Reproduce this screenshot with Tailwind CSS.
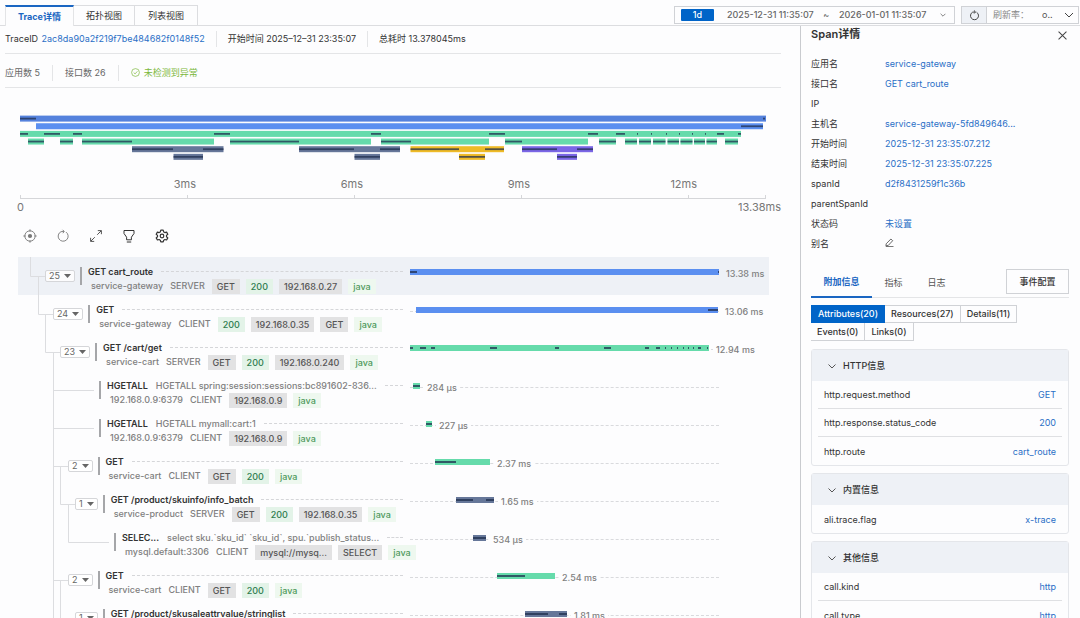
<!DOCTYPE html>
<html lang="zh-CN">
<head>
  <meta charset="UTF-8" />
  <meta name="viewport" content="width=device-width, initial-scale=1.0" />
  <title>Trace详情</title>
  <script src="https://cdn.jsdelivr.net/npm/@tailwindcss/browser@4"></script>
</head>
<body class="h-screen overflow-hidden bg-[#fdfdfe] font-['Inter','Noto_Sans_CJK_SC',sans-serif] text-[9px] leading-4 text-[#333]">
  <div class="flex h-full flex-col">
    <!-- Top bar -->
    <header class="flex h-[26px] shrink-0 items-end justify-between border-b border-[#dcdde0] pl-[5px] pr-px">
      <nav class="-mb-px flex h-[21px]">
        <button class="w-[69px] border-x border-t-2 border-x-[#e3e4e6] border-t-[#1a66c2] bg-[#fdfdfe] font-bold text-[#1a66c2]">Trace详情</button>
        <button class="w-[61px] border-y border-r border-[#dcdde0]">拓扑视图</button>
        <button class="w-[63px] border-y border-r border-[#dcdde0]">列表视图</button>
      </nav>
      <div class="mb-px flex gap-[6px] text-[#555]">
        <div class="flex h-[18px] w-[281px] items-center border border-[#d0d2d6] px-[6px]">
          <button class="h-3 w-[33px] rounded-[1px] bg-[#0064c8] font-medium leading-3 text-white">1d</button>
          <button class="ml-[13px] flex flex-1 items-center justify-between pr-[2px] font-medium text-[#666]">
            <span>2025-12-31 11:35:07</span><span>~</span><span>2026-01-01 11:35:07</span>
            <svg class="ml-1 h-[6px] w-[6px]" viewBox="0 0 6 6" fill="none" stroke="#666" stroke-width="0.8"><path d="M.6 1.8 3 4.2l2.4-2.4" /></svg>
          </button>
        </div>
        <div class="flex h-[18px] border border-[#d0d2d6]">
          <button aria-label="刷新" class="flex w-[25px] items-center justify-center border-r border-[#d0d2d6] bg-[#eef1f6]">
            <svg class="h-[11px] w-[11px]" viewBox="0 0 11 11" fill="none" stroke="#444"><path d="M7.6 2.3A4 4 0 1 1 3.6 2.2L6.2 1.900M4.900.400l1.600 1.500L5.200 3.500" /></svg>
          </button>
          <label class="flex w-[91px] items-center pl-[6px]">
            <span class="text-[#888]">刷新率：</span>
            <select class="ml-auto w-[18px] appearance-none bg-transparent"><option>o..</option></select>
            <svg class="mx-1 h-2 w-[10px] shrink-0" viewBox="0 0 10 8" fill="none" stroke="#444"><path d="M1 2l4 4 4-4" /></svg>
          </label>
        </div>
      </div>
    </header>

    <div class="flex min-h-0 flex-1">
      <!-- Trace -->
      <main class="min-w-0 flex-1 overflow-hidden">
        <section class="ml-[5px] mr-[19px]">
          <div class="flex h-7 items-center gap-[11px] border-b border-[#e4e5e7] pb-px">
            <div>TraceID <a href="#" class="ml-px text-[#2a6fc6]">2ac8da90a2f219f7be484682f0148f52</a></div>
            <span class="h-4 w-px bg-[#e4e5e7]"></span>
            <div>开始时间 2025–12–31 23:35:07</div>
            <span class="h-4 w-px bg-[#e4e5e7]"></span>
            <div>总耗时 13.378045ms</div>
          </div>
          <div class="flex h-[34px] items-center gap-3 border-b border-[#e4e5e7] pt-1 text-[#666]">
            <div>应用数 5</div>
            <span class="h-4 w-px bg-[#e4e5e7]"></span>
            <div>接口数 26</div>
            <span class="h-4 w-px bg-[#e4e5e7]"></span>
            <div class="flex items-center gap-1 text-[#7cb83c]">
              <svg class="h-[9px] w-[9px]" viewBox="0 0 9 9" fill="none" stroke="currentColor" stroke-width="0.7"><circle cx="4.5" cy="4.5" r="3.9" /><path d="M2.7 4.6l1.4 1.3 2.3-2.6" /></svg>
              未检测到异常
            </div>
          </div>
        </section>

        <!-- Overview -->
        <section class="ml-5 mr-[19px] pt-[27px] text-[11px] text-[#777]">
          <div class="pr-[15px]">
            <svg id="overview" class="block h-[46px] w-full" viewBox="0 0 746 46" preserveAspectRatio="none"></svg>
            <div class="flex pl-[9px] pt-[15px] text-right">
              <span class="w-[167px]">3ms</span><span class="w-[167px]">6ms</span><span class="w-[167px]">9ms</span><span class="w-[167px]">12ms</span>
            </div>
            <div class="mt-[3px] flex h-1 border-x border-b border-[#d5d6d9]">
              <span class="w-[167px] border-r border-[#d5d6d9]"></span><span class="w-[167px] border-r border-[#d5d6d9]"></span><span class="w-[167px] border-r border-[#d5d6d9]"></span><span class="w-[167px] border-r border-[#d5d6d9]"></span>
            </div>
          </div>
          <div class="-ml-[3px] flex justify-between"><span>0</span><span>13.38ms</span></div>
        </section>

        <!-- Tools -->
        <div class="flex h-[42px] items-center gap-[19px] pl-[23px] text-[#444]">
          <button aria-label="定位"><svg class="h-[14px] w-[14px]" viewBox="0 0 14 14" fill="none" stroke="#777" stroke-width="0.9"><circle cx="7" cy="7" r="5.2" /><circle cx="7" cy="7" r="2.1" fill="#777" stroke="none" /><path d="M7 .3v2.4M7 11.3v2.4M.3 7h2.4M11.3 7h2.4" /></svg></button>
          <button aria-label="重置"><svg class="h-[14px] w-[14px]" viewBox="0 0 14 14" fill="none" stroke="#777" stroke-width="0.9"><path d="M10 3.100A5 5 0 1 1 5 2.700l3-.3M6.600.800l1.600 1.600-1.300 1.800" /></svg></button>
          <button aria-label="全屏"><svg class="h-[14px] w-[14px]" viewBox="0 0 14 14" fill="none" stroke="#444" stroke-width="0.9"><path d="M8.2 5.8l4-4M8.8 1.6h3.6v3.6M5.8 8.2l-4 4M1.6 8.8v3.6h3.6" /></svg></button>
          <button aria-label="提示"><svg class="h-[14px] w-[14px]" viewBox="0 0 14 14" fill="none" stroke="#333"><path d="M2 1.5h10v3L9.4 8.2v2.6H4.6V8.2L2 4.5zM4.8 13h4.4" /></svg></button>
          <button aria-label="设置"><svg class="h-[14px] w-[14px]" viewBox="0 0 14 14" fill="none" stroke="#333" stroke-width="1.2" stroke-linejoin="round"><circle cx="7" cy="7" r="1.8" /><path d="M5.8 1.2h2.4l.5 1.7 1.2.7 1.7-.5 1.2 2.1-1.3 1.2v1.3l1.3 1.2-1.2 2.1-1.7-.5-1.2.7-.5 1.6H5.8l-.5-1.6-1.2-.7-1.7.5-1.2-2.1 1.3-1.2V6.4L1.2 5.2l1.2-2.1 1.7.5 1.2-.7z" /></svg></button>
        </div>

        <!-- Span list -->
        <div id="spans" class="ml-[18px] mr-[31px]"></div>
      </main>

      <!-- Span detail -->
      <aside class="w-[280px] shrink-0 overflow-hidden border-l border-[#c9cbcf] pl-[10px] pr-[11px]">
        <div class="flex items-center justify-between">
          <h2 class="text-[11px] font-semibold">Span详情</h2>
          <button aria-label="关闭"><svg class="mr-[2px] mt-[2px] h-[9px] w-[9px]" viewBox="0 0 8 8" stroke="#444" stroke-width="0.9"><path d="M.5.5l7 7M7.5.5l-7 7" /></svg></button>
        </div>
        <dl id="fields" class="mt-3 grid grid-cols-[74px_1fr] leading-5"></dl>

        <div class="mt-[15px] flex h-[29px] items-start border-b border-[#e4e5e7]">
          <button class="h-[29px] w-[61px] border-b-2 border-[#1a66c2] pb-px font-bold text-[#1a66c2]">附加信息</button>
          <button class="h-[27px] w-[43px] text-[#555]">指标</button>
          <button class="h-[27px] w-[43px] text-[#555]">日志</button>
          <button class="ml-auto h-[25px] w-[63px] border border-[#d0d2d6] font-medium">事件配置</button>
        </div>

        <div class="mt-[7px] font-medium">
          <div class="flex">
            <button class="h-[18px] border border-[#0064c8] bg-[#0064c8] px-[6px] text-white">Attributes(20)</button>
            <button class="h-[18px] border-y border-r border-[#d0d2d6] px-[6px]">Resources(27)</button>
            <button class="h-[18px] border-y border-r border-[#d0d2d6] px-[6px]">Details(11)</button>
          </div>
          <div class="flex">
            <button class="h-[18px] border-b border-r border-[#d0d2d6] px-[6px]">Events(0)</button>
            <button class="h-[18px] border-b border-r border-[#d0d2d6] px-[6px]">Links(0)</button>
          </div>
        </div>

        <div id="groups" class="mt-2 space-y-[7px]"></div>
      </aside>
    </div>
  </div>

  <script>
    const colors = { blue: '#5b8ff0', deep: '#5582dd', green: '#66dbab', slate: '#667799', yellow: '#efbb27', purple: '#7b66e6' };

    // Overview bars: [row, color, start, end, [dark segments]]
    const overview = [
      [0, 'deep', 0, 746, [[0, 16], [743, 745]]],
      [1, 'blue', 16, 743, [[721, 743]]],
      [2, 'green', 0, 721, [[0, 8], [24, 40], [53, 62], [194, 210], [351, 361], [469, 485], [568, 578], [596, 605], [617, 618], [631, 632], [646, 647], [659, 660], [672, 673], [685, 686], [697, 704], [718, 721]]],
      [3, 'green', 8, 24, [[8, 24]]], [3, 'green', 40, 53, [[40, 53]]],
      [3, 'green', 62, 194, [[62, 112]]], [3, 'green', 210, 351, [[210, 279]]],
      [3, 'green', 361, 469, [[361, 391]]], [3, 'green', 485, 568, [[485, 502]]],
      ...[[579, 596], [605, 617], [619, 631], [633, 645.5], [647.5, 659], [660.5, 672.5], [674, 685], [686.5, 697], [705, 718]].map(s => [3, 'green', ...s, [s]]),
      [4, 'slate', 112, 203.5, [[112, 153], [183, 203.5]]], [4, 'slate', 279, 380, [[279, 334], [360, 380]]],
      [4, 'yellow', 390.5, 484, [[390.5, 439], [465, 484]]], [4, 'purple', 502, 573, [[502, 537], [557, 573]]],
      [5, 'slate', 153.5, 183, [[153.5, 183]]], [5, 'slate', 334.5, 360, [[334.5, 360]]],
      [5, 'yellow', 439, 465, [[439, 465]]], [5, 'purple', 537, 557, [[537, 557]]]
    ];
    document.getElementById('overview').innerHTML = overview.map(([row, color, a, b, dark]) => {
      const y = 0.6 + row * 7.65;
      return `<rect x="${a}" y="${y}" width="${b - a}" height="6" fill="${colors[color]}" />` +
        dark.map(([s, e]) => `<rect x="${s}" y="${y + 2.1}" width="${e - s}" height="1.8" fill="#1f2d4d" fill-opacity="0.75" />`).join('');
    }).join('');

    // guides: ancestor levels still open; bar and dark are on a 309 wide scale
    const spans = [
      { depth: 0, count: 25, title: 'GET cart_route', service: 'service-gateway', kind: 'SERVER', tags: ['GET', '200', '192.168.0.27', 'java'], guides: [], color: 'blue', bar: [0, 309], dark: [[0, 7], [308, 309]], time: '13.38 ms' },
      { depth: 1, count: 24, title: 'GET', service: 'service-gateway', kind: 'CLIENT', tags: ['200', '192.168.0.35', 'GET', 'java'], guides: [], color: 'blue', bar: [6, 308], dark: [[298, 308]], time: '13.06 ms' },
      { depth: 2, count: 23, title: 'GET /cart/get', service: 'service-cart', kind: 'SERVER', tags: ['GET', '200', '192.168.0.240', 'java'], guides: [], color: 'green', bar: [0, 299], dark: [[0, 3], [10, 16], [21, 25], [80, 87], [145, 149], [194, 201], [235, 239], [246, 250], [255, 256], [261, 262], [267, 268], [273, 274], [278, 279], [283, 284], [288, 291], [297, 298]], time: '12.94 ms' },
      { depth: 3, title: 'HGETALL', detail: 'HGETALL spring:session:sessions:bc891602-836...', service: '192.168.0.9:6379', kind: 'CLIENT', tags: ['192.168.0.9', 'java'], guides: [3], color: 'green', bar: [3, 10], dark: [[3, 10]], time: '284 µs' },
      { depth: 3, title: 'HGETALL', detail: 'HGETALL mymall:cart:1', service: '192.168.0.9:6379', kind: 'CLIENT', tags: ['192.168.0.9', 'java'], guides: [3], color: 'green', bar: [16, 22], dark: [[16, 22]], time: '227 µs' },
      { depth: 3, count: 2, title: 'GET', service: 'service-cart', kind: 'CLIENT', tags: ['GET', '200', 'java'], guides: [3], color: 'green', bar: [25, 80], dark: [[25, 46]], time: '2.37 ms' },
      { depth: 4, count: 1, title: 'GET /product/skuinfo/info_batch', service: 'service-product', kind: 'SERVER', tags: ['GET', '200', '192.168.0.35', 'java'], guides: [3], color: 'slate', bar: [46, 84], dark: [[46, 63], [76, 84]], time: '1.65 ms' },
      { depth: 5, title: 'SELEC...', detail: 'select sku.`sku_id` `sku_id`, spu.`publish_status...', service: 'mysql.default:3306', kind: 'CLIENT', tags: ['mysql://mysq...', 'SELECT', 'java'], guides: [3], color: 'slate', bar: [63, 76], dark: [[63, 76]], time: '534 µs' },
      { depth: 3, count: 2, title: 'GET', service: 'service-cart', kind: 'CLIENT', tags: ['GET', '200', 'java'], guides: [3], color: 'green', bar: [87, 145], dark: [[87, 115]], time: '2.54 ms' },
      { depth: 4, count: 1, title: 'GET /product/skusaleattrvalue/stringlist', service: 'service-product', kind: 'SERVER', tags: ['GET', '200', '192.168.0.35', 'java'], guides: [3], color: 'slate', bar: [115, 157], dark: [[115, 138], [149, 157]], time: '1.81 ms' }
    ];
    const tagClass = { '200': 'bg-[#e3f3e8] text-[#2f7d4f]', java: 'bg-[#eef8ef] text-[#4e9a5c]' };
    const guideX = d => Math.floor(12.5 + 7.5 * d) + 0.5;

    document.getElementById('spans').innerHTML = spans.map((s, i) => {
      const gutter = Math.floor(27.5 + 7.5 * s.depth) + (s.count ? 0 : 31);
      const stem = guideX(s.depth);
      const lines = s.guides.map(g => `M${guideX(g)} 0V38`).join('') +
        `M${stem} 0V19.5H${s.count ? gutter : gutter - 5}` +
        (s.count ? `M${guideX(s.depth + 1)} 19.5V38` : '');
      const pct = n => (n / 309 * 100) + '%';
      return `
        <div class="flex h-[38px] ${i === 0 ? 'bg-[#eef1f6]' : ''}">
          <div class="flex w-[385px] shrink-0">
            <svg class="h-[38px] shrink-0 overflow-visible" style="width:${gutter}px" fill="none" stroke="#dcdde0"><path d="${lines}" /></svg>
            ${s.count ? `<button class="z-10 mr-[5px] mt-[13px] flex h-3 shrink-0 items-center gap-1 rounded-[2px] border border-[#d5d6d9] bg-white/80 px-[3px] leading-3 text-[#666]">${s.count}<svg class="h-1 w-[7px]" viewBox="0 0 7 4" fill="#666"><path d="M0 0h7L3.5 4z" /></svg></button>` : ''}
            <span class="mt-[10px] h-[18px] w-[2px] shrink-0 bg-[#a5a6a9]"></span>
            <div class="min-w-0 flex-1 whitespace-nowrap pl-[6px] pt-2 font-medium text-[#808080]">
              <div class="flex h-[13px] items-center">
                <span class="font-semibold text-[#333]">${s.title}</span>
                ${s.detail ? `<span class="ml-2">${s.detail}</span>` : ''}
                <span class="ml-2 min-w-0 flex-1 border-t border-dashed border-[#d5d6d9]"></span>
              </div>
              <div class="flex items-center gap-[6px] pl-[3px]">
                <span class="mr-px">${s.service}</span><span class="mr-px">${s.kind}</span>
                ${s.tags.map(t => `<span class="h-[15px] px-[5px] leading-[15px] ${tagClass[t] || 'bg-[#e2e2e3] text-[#555]'}">${t}</span>`).join('')}
              </div>
            </div>
          </div>
          <div class="ml-[7px] mr-[50px] flex-1 pt-[12px]">
            <div class="relative h-[6px]">
              <div class="absolute inset-x-0 top-1 border-t border-dashed border-[#d9dadd]"></div>
              <div class="absolute inset-y-0" style="left:${pct(s.bar[0])};width:${pct(s.bar[1] - s.bar[0])};background:${colors[s.color]}"></div>
              ${s.dark.map(([a, b]) => `<div class="absolute top-[2px] h-[2px] bg-[#1f2d4d]/75" style="left:${pct(a)};width:${pct(b - a)}"></div>`).join('')}
              <span class="absolute -top-[3px] ml-1 whitespace-nowrap px-[3px] font-medium text-[#808080] ${i === 0 ? '' : 'bg-[#fdfdfe]'}" style="left:${pct(s.bar[1])}">${s.time}</span>
            </div>
          </div>
        </div>`;
    }).join('');

    const edit = '<button aria-label="编辑"><svg class="h-[9px] w-[9px]" viewBox="0 0 9 9" fill="none" stroke="#444" stroke-width="0.8"><path d="M1.2 5.8 5.9 1l1.8 1.7L3.2 7.5l-2.3.3zM.8 8.6h7.7" /></svg></button>';
    const fields = [
      ['应用名', 'service-gateway'], ['接口名', 'GET cart_route'], ['IP', ''], ['主机名', 'service-gateway-5fd849646...'],
      ['开始时间', '2025-12-31 23:35:07.212'], ['结束时间', '2025-12-31 23:35:07.225'], ['spanId', 'd2f8431259f1c36b'],
      ['parentSpanId', ''], ['状态码', '未设置'], ['别名', edit]
    ];
    document.getElementById('fields').innerHTML = fields.map(([k, v]) =>
      `<dt class="h-5">${k}</dt><dd class="h-5 text-[#2a6fc6]">${v}</dd>`).join('');

    const groups = [
      ['HTTP信息', [['http.request.method', 'GET'], ['http.response.status_code', '200'], ['http.route', 'cart_route']]],
      ['内置信息', [['ali.trace.flag', 'x-trace']]],
      ['其他信息', [['call.kind', 'http'], ['call.type', 'http']]]
    ];
    document.getElementById('groups').innerHTML = groups.map(([name, rows]) => `
      <section class="rounded-[3px] border border-[#e4e6ea]">
        <button class="flex h-[31px] w-full items-center gap-[7px] bg-[#eef1f6] pl-4 font-medium">
          <svg class="h-2 w-2" viewBox="0 0 8 8" fill="none" stroke="#444" stroke-width="0.9"><path d="M.5 2.5 4 6l3.5-3.5" /></svg>${name}
        </button>
        <div class="divide-y divide-[#dfe0e3] px-[6px]">
          ${rows.map(([k, v]) => `<div class="flex h-7 items-center justify-between px-[6px] pt-px"><span>${k}</span><span class="text-[#2a6fc6]">${v}</span></div>`).join('')}
        </div>
      </section>`).join('');
  </script>
</body>
</html>
